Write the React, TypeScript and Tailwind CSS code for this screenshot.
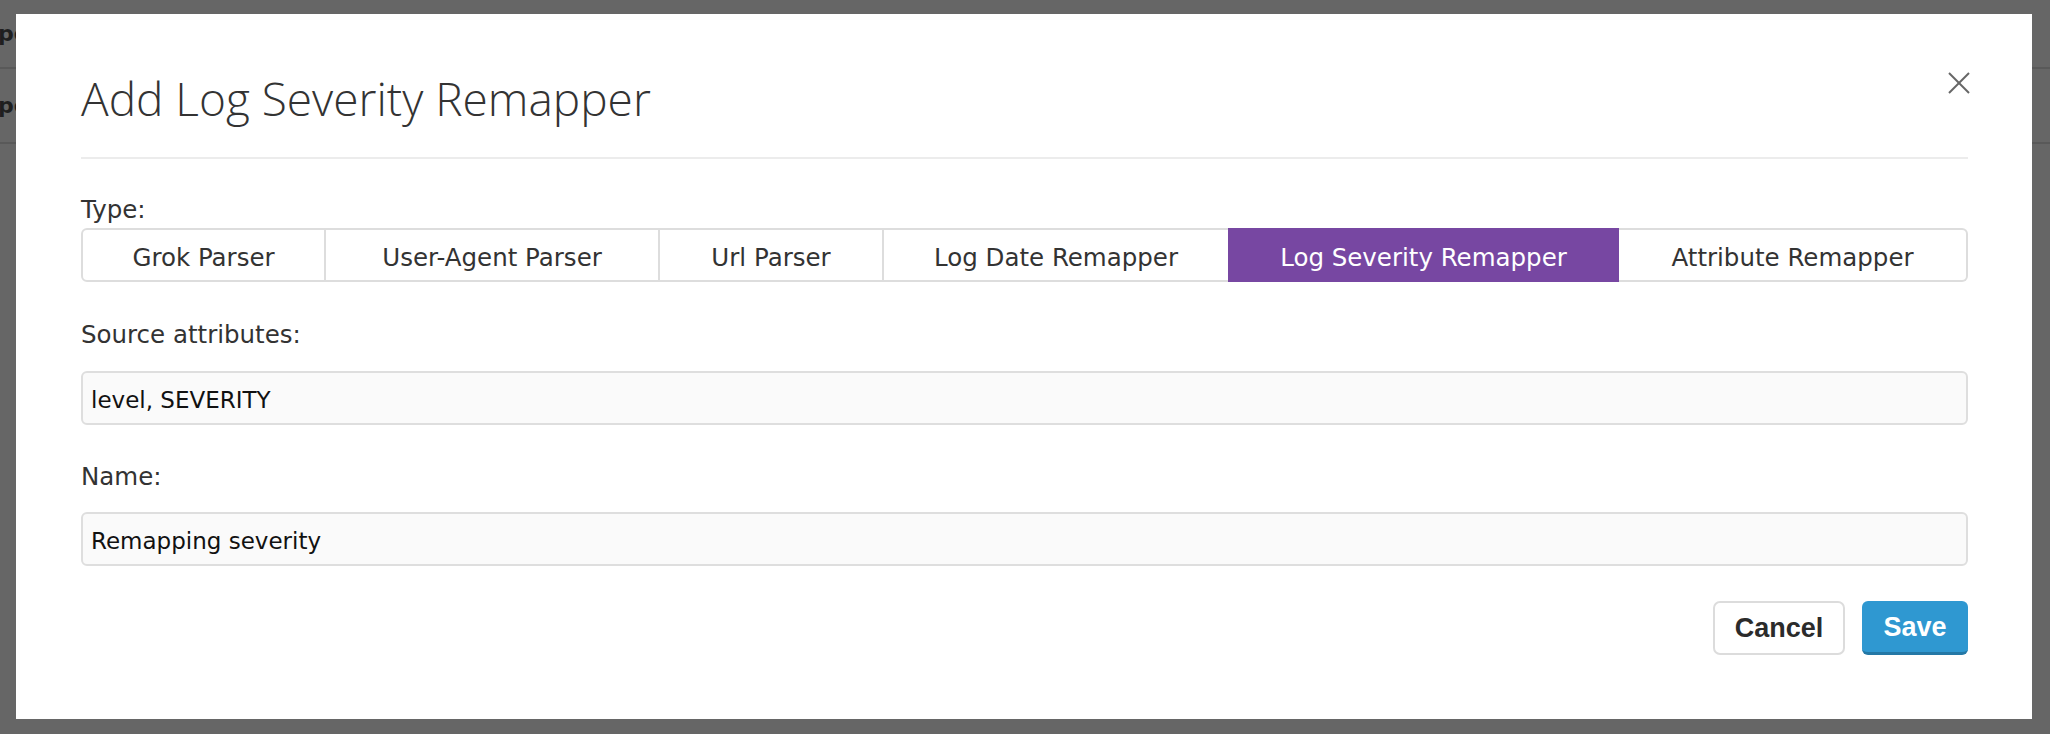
import React from "react";

export default function App() {
  return (
    <div className="relative w-[2050px] h-[734px] overflow-hidden bg-[#666666] font-['DejaVu_Sans',sans-serif]">
      {/* dimmed page behind the modal */}
      <div className="flex flex-col">
        <div className="h-[69px] border-b-2 border-[#595959] flex items-center">
          <span className="-ml-[2px] text-[22px] font-semibold text-[#1f1f1f]">pe</span>
        </div>
        <div className="h-[75px] border-b-2 border-[#595959] flex items-center">
          <span className="-ml-[2px] text-[22px] font-semibold text-[#1f1f1f]">pe</span>
        </div>
      </div>

      {/* modal */}
      <div className="absolute left-[16px] top-[14px] w-[2016px] h-[705px] bg-white pl-[65px] pr-[64px]">
        <button className="absolute right-[62px] top-[58px] w-[22px] h-[22px]" aria-label="Close">
          <svg viewBox="0 0 22 22" width="22" height="22" fill="none" stroke="#666666" strokeWidth="2">
            <line x1="1" y1="1" x2="21" y2="21" />
            <line x1="21" y1="1" x2="1" y2="21" />
          </svg>
        </button>

        <div className="h-[143px] pt-[53px]">
          <h1 className="font-['Open_Sans',sans-serif] font-light text-[46px] leading-[62px] text-[#333333]">
            Add Log Severity Remapper
          </h1>
        </div>
        <div className="h-[2px] bg-[#ececec]" />

        <div className="mt-[37px] text-[24.5px] leading-[28px] text-[#333333]">Type:</div>

        <div className="mt-[4px] flex h-[54px] text-[24.5px] leading-[28px]">
          <div className="w-[245px] flex items-center justify-center pt-[5px] border-2 border-[#dddddd] rounded-l-[6px] bg-white text-[#333333]">
            Grok Parser
          </div>
          <div className="w-[334px] flex items-center justify-center pt-[5px] border-y-2 border-r-2 border-[#dddddd] bg-white text-[#333333]">
            User-Agent Parser
          </div>
          <div className="w-[224px] flex items-center justify-center pt-[5px] border-y-2 border-r-2 border-[#dddddd] bg-white text-[#333333]">
            Url Parser
          </div>
          <div className="w-[344px] flex items-center justify-center pt-[5px] border-y-2 border-[#dddddd] bg-white text-[#333333]">
            Log Date Remapper
          </div>
          <div className="w-[391px] flex items-center justify-center pt-[5px] border-2 border-[#7747a2] bg-[#7747a2] text-white">
            Log Severity Remapper
          </div>
          <div className="w-[349px] flex items-center justify-center pt-[5px] border-y-2 border-r-2 border-[#dddddd] rounded-r-[6px] bg-white text-[#333333]">
            Attribute Remapper
          </div>
        </div>

        <div className="mt-[39px] text-[24.5px] leading-[28px] text-[#333333]">Source attributes:</div>
        <input
          readOnly
          value="level, SEVERITY"
          className="mt-[22px] block w-full h-[54px] px-[8px] pt-[4px] text-[23px] leading-[28px] text-[#111111] bg-[#fafafa] border-2 border-[#dedede] rounded-[6px] outline-none font-['DejaVu_Sans',sans-serif]"
        />

        <div className="mt-[38px] text-[24.5px] leading-[28px] text-[#333333]">Name:</div>
        <input
          readOnly
          value="Remapping severity"
          className="mt-[21px] block w-full h-[54px] px-[8px] pt-[4px] text-[23px] leading-[28px] text-[#111111] bg-[#fafafa] border-2 border-[#dedede] rounded-[6px] outline-none font-['DejaVu_Sans',sans-serif]"
        />

        <div className="mt-[35px] flex justify-end gap-[17px] font-['Liberation_Sans',Arial,sans-serif]">
          <button className="w-[132px] h-[54px] flex items-center justify-center bg-white border-2 border-[#dcdcdc] rounded-[7px] text-[27px] leading-[31px] font-bold text-[#2b2b2b]">
            Cancel
          </button>
          <button className="w-[106px] h-[54px] flex items-center justify-center pt-[2px] bg-[#2f98d1] border-b-[3px] border-[#2478a6] rounded-[6px] text-[27px] leading-[31px] font-bold text-white">
            Save
          </button>
        </div>
      </div>
    </div>
  );
}
